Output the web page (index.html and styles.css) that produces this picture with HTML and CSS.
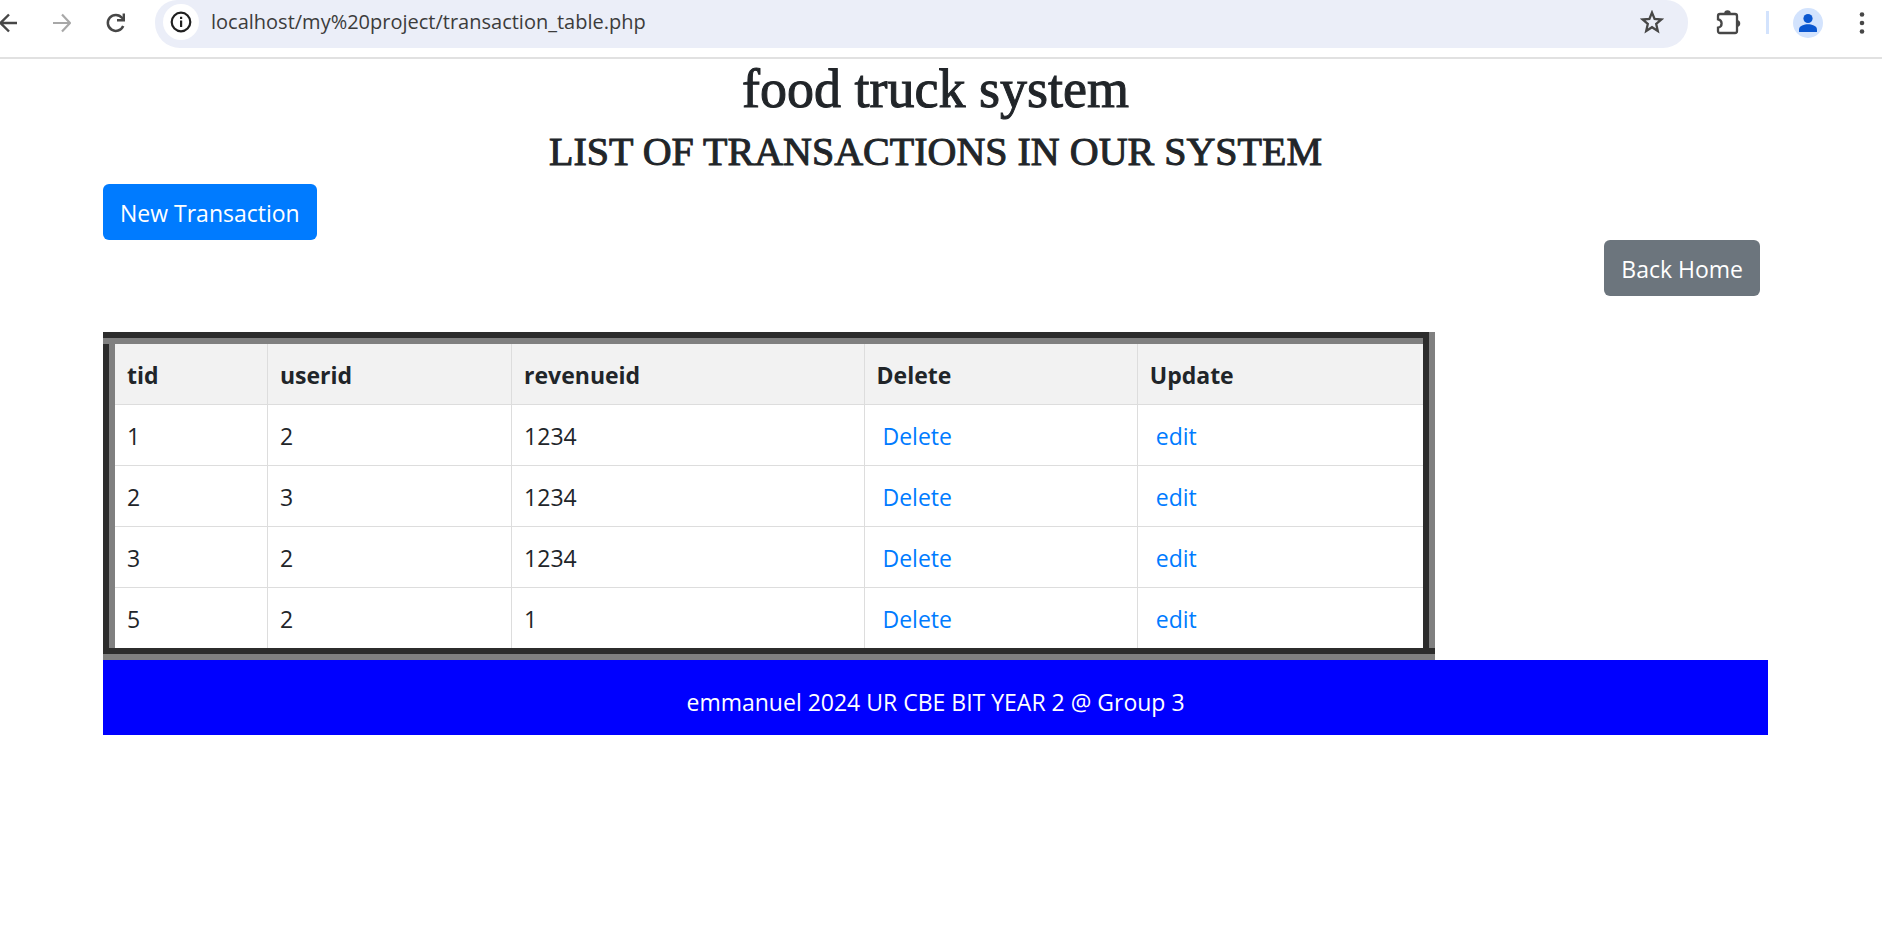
FILE: index.html
```html
<!DOCTYPE html>
<html lang="en">
<head>
<meta charset="utf-8">
<title>Transactions</title>
<link rel="stylesheet" href="styles.css">
</head>
<body>
<div class="toolbar">
  <div class="nav">
    <button class="icon-btn" aria-label="Back"><svg width="18" height="20" viewBox="0 0 18 20"><path d="M17 10H1M9 1.5L.5 10L9 18.5" fill="none" stroke="#474747" stroke-width="2.4"/></svg></button>
    <button class="icon-btn" aria-label="Forward"><svg width="18" height="20" viewBox="0 0 18 20"><path d="M0 10H16M9 1.5L17 10L9 18.5" fill="none" stroke="#a8a8a8" stroke-width="2.2"/></svg></button>
    <button class="icon-btn" aria-label="Reload"><svg width="20" height="20" viewBox="0 0 20 20"><path d="M17.2 13A8 8 0 1 1 16 4.8L17.6 6.6" fill="none" stroke="#474747" stroke-width="2.5"/><path d="M19 .5V8.4H11V6H16.6V.5Z" fill="#474747"/></svg></button>
  </div>
  <div class="omnibox">
    <button class="site-info" aria-label="Site information"><svg width="22" height="22" viewBox="0 0 22 22"><circle cx="11" cy="11" r="9.3" fill="none" stroke="#1f1f1f" stroke-width="2.2"/><path d="M10 9.6h2.2V16H10zM10 5.8h2.2V8H10z" fill="#1f1f1f"/></svg></button>
    <input class="url" type="text" aria-label="Address" value="localhost/my%20project/transaction_table.php">
    <button class="icon-btn" aria-label="Bookmark"><svg width="24" height="24" viewBox="0 0 24 24"><path d="M12 2.6L14.6 9L21.4 9.5L16.2 13.9L17.8 20.9L12 17.2L6.2 20.9L7.8 13.9L2.6 9.5L9.4 9Z" fill="none" stroke="#474747" stroke-width="2.3"/></svg></button>
  </div>
  <div class="actions">
    <button class="icon-btn" aria-label="Extensions"><svg width="26" height="26" viewBox="0 0 26 26"><path d="M4 4H19Q21 4 21 6V21Q21 23 19 23H4Q2 23 2 21V17.6Q5.6 17 5.6 13.5T2 9.4V6Q2 4 4 4Z" fill="none" stroke="#474747" stroke-width="2.3"/><path d="M8.2 3.5A3.3 3.3 0 0 1 14.8 3.5ZM21.5 10A3.6 3.6 0 0 1 21.5 17Z" fill="#474747"/></svg></button>
    <span class="divider"></span>
    <button class="avatar" aria-label="Profile"><svg width="30" height="30" viewBox="0 0 30 30"><circle cx="15" cy="10.5" r="4.6" fill="#0b57d0"/><path d="M6 24V21.4C6 17.8 11.4 16.2 15 16.2S24 17.8 24 21.4V24Z" fill="#0b57d0"/></svg></button>
    <button class="icon-btn" aria-label="Menu"><svg width="6" height="24" viewBox="0 0 6 24"><g fill="#474747"><circle cx="3" cy="3.5" r="2.3"/><circle cx="3" cy="12" r="2.3"/><circle cx="3" cy="20.5" r="2.3"/></g></svg></button>
  </div>
</div>
<main class="container">
  <h1>food truck system</h1>
  <h2>LIST OF TRANSACTIONS IN OUR SYSTEM</h2>
  <div class="row"><a class="btn primary" href="#new">New Transaction</a></div>
  <div class="row end"><a class="btn secondary" href="#home">Back Home</a></div>
  <table>
    <colgroup><col class="c-tid"><col class="c-user"><col class="c-rev"><col class="c-del"><col class="c-upd"></colgroup>
    <thead><tr><th>tid</th><th>userid</th><th>revenueid</th><th>Delete</th><th>Update</th></tr></thead>
    <tbody>
      <tr><td>1</td><td>2</td><td>1234</td><td><a href="#d1">Delete</a></td><td><a href="#e1">edit</a></td></tr>
      <tr><td>2</td><td>3</td><td>1234</td><td><a href="#d2">Delete</a></td><td><a href="#e2">edit</a></td></tr>
      <tr><td>3</td><td>2</td><td>1234</td><td><a href="#d3">Delete</a></td><td><a href="#e3">edit</a></td></tr>
      <tr><td>5</td><td>2</td><td>1</td><td><a href="#d5">Delete</a></td><td><a href="#e5">edit</a></td></tr>
    </tbody>
  </table>
  <footer>emmanuel 2024 UR CBE BIT YEAR 2 @ Group 3</footer>
</main>
</body>
</html>
```
FILE: styles.css
```css
* { box-sizing: border-box; }
body {
  margin: 0;
  background: #fff;
  color: #212529;
  font: 23px/36px "Open Sans", "Noto Sans", sans-serif;
}
button { border: 0; padding: 0; background: none; display: flex; align-items: center; justify-content: center; }
svg { display: block; }
a { text-decoration: none; }

.toolbar {
  display: flex;
  height: 59px;
  border-bottom: 2px solid #e1e1e1;
}
.nav {
  display: flex;
  align-items: center;
  justify-content: space-between;
  width: 126px;
  height: 45px;
  margin-right: 29px;
}
.omnibox {
  flex: 1;
  display: flex;
  align-items: center;
  height: 48px;
  padding: 0 24px 4px 8px;
  background: #ebeef8;
  border-radius: 22px 22px 25px 25px;
}
.site-info { width: 36px; height: 36px; border-radius: 50%; background: #fff; }
.url {
  flex: 1;
  border: 0;
  padding: 0;
  margin-left: 12px;
  background: none;
  color: #3c3c3c;
  font: 20px/28px "Open Sans", "Noto Sans", sans-serif;
}
.actions {
  display: flex;
  align-items: center;
  gap: 24px;
  height: 45px;
  padding: 0 17px 0 28px;
}
.divider { width: 3px; height: 23px; background: #d3e3fd; }
.avatar { width: 30px; height: 30px; margin-right: 12px; border-radius: 50%; background: #d3e3fd; }

.container { padding: 0 114px 0 103px; }
h1, h2 {
  margin: 0 0 12px;
  text-align: center;
  font-family: "Century Schoolbook", "Liberation Serif", serif;
  font-weight: 500;
  -webkit-text-stroke: 1px #212529;
}
h1 { font-size: 54px; line-height: 60px; }
h2 { font-size: 40px; line-height: 41px; }

.row { display: flex; }
.end { justify-content: flex-end; padding-right: 8px; }
.btn {
  padding: 11px 17px 9px;
  border-radius: 6px;
  color: #fff;
}
.primary { background: #007bff; }
.secondary { background: #6c757d; }

table {
  width: 80%;
  margin-top: 36px;
  table-layout: fixed;
  border-collapse: collapse;
  border: 12px groove gray;
}
.c-tid { width: 12%; }
.c-user { width: 18.5%; }
.c-rev { width: 26.7%; }
.c-del { width: 20.7%; }
th, td {
  padding: 13px 12px 11px;
  border: 1px solid #ddd;
  text-align: left;
}
th { background: #f2f2f2; }
td a { padding: 6px; color: #007bff; }

footer {
  padding: 24px 0 15px;
  background: blue;
  color: #fff;
  text-align: center;
}
```
